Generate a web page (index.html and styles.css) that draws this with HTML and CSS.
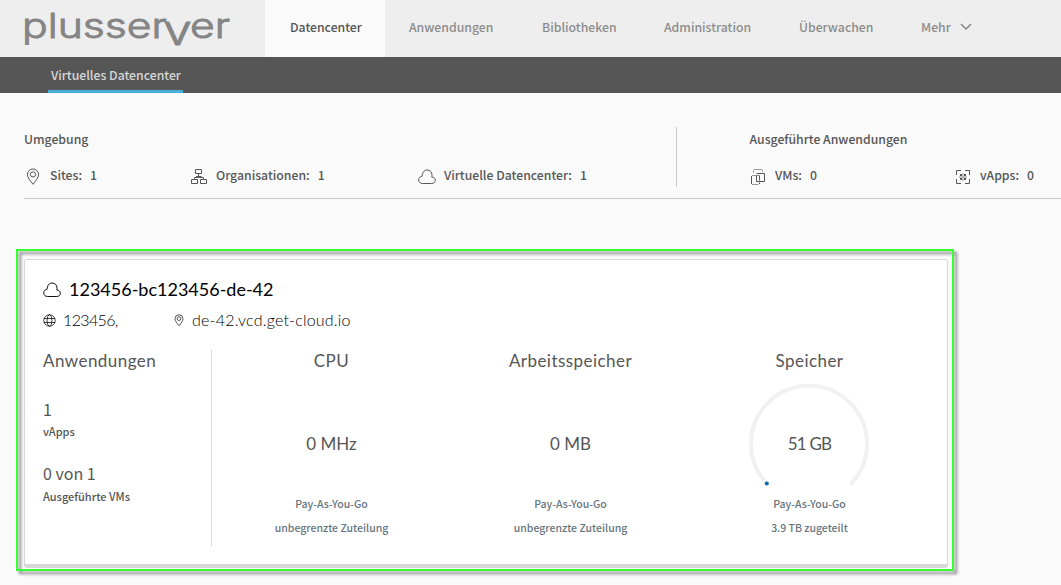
FILE: index.html
```html
<!DOCTYPE html>
<html lang="de">
<head>
<meta charset="utf-8">
<title>Virtuelles Datencenter</title>
<link rel="stylesheet" href="styles.css">
</head>
<body>
<svg class="sprite" aria-hidden="true">
  <symbol id="pin" viewBox="0 0 14 18"><path d="M7 16.3C4.2 12.6 1.4 9.6 1.4 6.6a5.6 5.6 0 0 1 11.2 0C12.6 9.6 9.8 12.6 7 16.3Z"/><circle cx="7" cy="6.4" r="2.6"/></symbol>
  <symbol id="cloud" viewBox="0 0 18 16"><path d="M4.6 14.5C2.2 14.5.7 13 .7 10.900C.7 8.900 2.2 7.400 4.200 7.200C4.300 6.600 4.200 6.100 4.400 5.200C5.100 2.500 6.800 1 9 1C12.100 1 14 3.100 14 6.200C14 7 13.900 7.500 13.700 8C15.900 8.100 17.300 9.300 17.300 11.200C17.300 13.200 15.800 14.500 13.800 14.500Z"/></symbol>
</svg>
<header class="topbar">
  <svg class="logo" viewBox="0 0 210 48" role="img" aria-label="plusserver"><text x="-1" y="37.500" textLength="208" lengthAdjust="spacingAndGlyphs">plusser<tspan class="logo-v" dx="-3" dy="7">v</tspan><tspan dx="-1.500" dy="-7">er</tspan></text></svg>
  <nav class="nav">
    <a class="nav-item active">Datencenter</a>
    <a class="nav-item apps">Anwendungen</a>
    <a class="nav-item libs">Bibliotheken</a>
    <a class="nav-item admin">Administration</a>
    <a class="nav-item watch">Überwachen</a>
    <a class="nav-item more">Mehr <svg width="12" height="8" viewBox="0 0 12 8"><path d="M1 1l5 5 5-5"/></svg></a>
  </nav>
</header>
<div class="subnav"><a class="subnav-item">Virtuelles Datencenter</a></div>
<main>
  <section class="summary">
    <div class="group env">
      <h2>Umgebung</h2>
      <div class="stats">
        <div class="stat sites"><svg class="icon" width="14" height="18"><use href="#pin"/></svg><span>Sites:</span><b>1</b></div>
        <div class="stat orgs"><svg class="icon" width="16" height="16" viewBox="0 0 16 16"><path d="M4.500.5h6v4h-6zM7.500 4.500v3M5 7.500h5.500M3.500 10.500v-2h9v2M.5 10.500h6v4h-6zM9.500 10.500h6v4h-6z"/></svg><span>Organisationen:</span><b>1</b></div>
        <div class="stat vdcs"><svg class="icon" width="18" height="16"><use href="#cloud"/></svg><span>Virtuelle Datencenter:</span><b>1</b></div>
      </div>
    </div>
    <div class="group running">
      <h2>Ausgeführte Anwendungen</h2>
      <div class="stats">
        <div class="stat vms"><svg class="icon" width="15" height="16" viewBox="0 0 15 16"><path class="soft" d="M2.500 3.500V1.500q0-1 1-1h7q1 0 1 1V3M1 6.500h7.500M1 15.500h6.500"/><path d="M.5 15V7M8.500 6.500v5M8.500 13.500v1.500M5.500 6.500v6h8V4.500H5.500"/></svg><span>VMs:</span><b>0</b></div>
        <div class="stat vapps"><svg class="icon" width="14" height="14" viewBox="0 0 14 14"><path d="M.5 5V.5H5M9 .5h4.500V5M13.500 9v4.500H9M5 13.500H.5V9"/><path class="soft" d="M3 7h8M7 3v8"/><path class="solid" d="M4 4h2v2H4zM8 4h2v2H8zM4 8h2v2H4zM8 8h2v2H8z"/></svg><span>vApps:</span><b>0</b></div>
      </div>
    </div>
  </section>
  <div class="highlight">
    <article class="card">
      <div class="title"><svg class="icon" width="18" height="16"><use href="#cloud"/></svg><h1>123456-bc123456-de-42</h1></div>
      <div class="meta">
        <svg class="icon globe" width="13" height="13" viewBox="0 0 13 13"><circle cx="6.500" cy="6.500" r="5.700"/><ellipse cx="6.500" cy="6.500" rx="2.400" ry="5.700"/><path d="M1 4.500h11M1 8.500h11"/></svg>
        <span class="org">123456,</span>
        <svg class="icon" width="10" height="13"><use href="#pin" width="10" height="13"/></svg>
        <span class="host">de-42.vcd.get-cloud.io</span>
      </div>
      <div class="metrics">
        <div class="apps-col">
          <h3>Anwendungen</h3>
          <p class="count">1</p><p class="label">vApps</p>
          <p class="count second">0 von 1</p><p class="label last">Ausgeführte VMs</p>
        </div>
        <div class="metric"><h3>CPU</h3><div class="gauge"><span>0 MHz</span></div><p>Pay-As-You-Go</p><p>unbegrenzte Zuteilung</p></div>
        <div class="metric"><h3>Arbeitsspeicher</h3><div class="gauge"><span>0 MB</span></div><p>Pay-As-You-Go</p><p>unbegrenzte Zuteilung</p></div>
        <div class="metric"><h3>Speicher</h3><div class="gauge"><svg class="ring" width="120" height="120" viewBox="0 0 120 120"><path d="M17.600 100.400A58 58 0 1 1 102.400 100.400"/><circle cx="17.800" cy="100.500" r="2"/></svg><span class="gb">51 GB</span></div><p>Pay-As-You-Go</p><p>3.9 TB zugeteilt</p></div>
      </div>
    </article>
  </div>
</main>
</body>
</html>
```
FILE: styles.css
```css
* { box-sizing: border-box; }
body { margin: 0; height: 585px; overflow: hidden; background: #fafafa; color: #565656; font: 500 12.25px/24px "Noto Sans CJK SC", "Noto Sans", sans-serif; }
h1, h2, h3, p { margin: 0; font-weight: inherit; font-size: inherit; }
.sprite { display: none; }
.topbar { display: flex; height: 57px; background: #eee; padding-left: 23px; }
.logo { width: 210px; height: 48px; margin-right: 32px; flex: none; overflow: visible; }
.logo text { font: 300 34px Inter, sans-serif; fill: #858585; stroke: #858585; stroke-width: .9px; }
.logo .logo-v { font-size: 41px; font-weight: 300; }
.nav { display: flex; color: #8c8c8c; line-height: 54px; white-space: nowrap; }
.nav-item { flex: none; }
.active { width: 120px; padding-left: 25px; background: #fafafa; color: #565656; }
.apps { width: 157px; padding-left: 24px; }
.libs { width: 122px; }
.admin { width: 135px; }
.watch { width: 122px; }
.more { display: flex; align-items: center; gap: 9px; height: 54px; }
.more svg { fill: none; stroke: #858585; stroke-width: 1.5; }
.subnav { height: 36px; background: #565656; padding-left: 48px; color: #d7d7d7; }
.subnav-item { display: block; width: 135px; height: 36px; padding-left: 3px; line-height: 36px; border-bottom: 3px solid #49afd9; white-space: nowrap; }
.summary { display: flex; margin: 34px 0 0 24px; height: 72px; border-bottom: 1px solid #ccc; }
.env { width: 653px; height: 60px; border-right: 1px solid #ccc; }
.running { padding-left: 72.500px; }
.group h2 { line-height: 24px; }
.stats { display: flex; padding-top: 12px; white-space: nowrap; }
.stat { display: flex; flex: none; height: 24px; line-height: 24px; }
.stat b { font-weight: inherit; margin-left: 8px; }
.stat .icon { margin-top: 6px; }
.icon { flex: none; fill: none; stroke: #565656; stroke-width: 1; }
.icon .solid { fill: #565656; stroke: none; }
.icon .soft { stroke: #999; }
.sites { width: 167px; padding-left: 2px; }
.stat.sites .icon { margin-top: 5px; }
.sites span { margin-left: 10px; }
.orgs { width: 227px; }
.orgs span { margin-left: 9px; }
.vdcs span { margin-left: 8px; }
.vms { width: 206.500px; padding-left: 1.500px; }
.vms span { margin-left: 9px; }
.stat.vapps .icon { margin-top: 7px; }
.vapps span { margin-left: 10px; }
.highlight { position: relative; width: 938px; height: 322px; margin: 50px 0 0 16px; padding: 10px 6px 3px 8px; }
.highlight::after { content: ""; position: absolute; inset: 0; border: 2px solid #3f3; filter: drop-shadow(3px 3px 1.5px rgba(0,0,0,.5)); pointer-events: none; }
.card { height: 309px; background: #fff; border: 1px solid #d7d7d7; border-bottom-width: 4px; border-radius: 3px; padding: 18px; }
.card .icon { stroke: #111; }
.card .globe { stroke-width: .8; }
.title { display: flex; height: 24px; gap: 8px; color: #000; }
.title .icon { margin-top: 4px; }
h1, h3, .meta span, .gauge span { font-family: Lato, sans-serif; font-weight: 400; }
h1 { font-size: 18px; line-height: 22px; }
.meta { display: flex; height: 24px; margin-top: 6px; color: #000; line-height: 24px; align-items: center; font-size: 16px; }
.meta .org { width: 111px; margin-left: 7px; font-weight: 300; letter-spacing: -.65px; }
.meta .host { margin-left: 8px; font-weight: 300; letter-spacing: .2px; }
.metrics { display: flex; margin-top: 18px; height: 196px; }
.apps-col { width: 169px; border-right: 1px solid #d7d7d7; }
.metric { width: 239px; text-align: center; font-size: 10.500px; color: #667580; }
h3 { height: 24px; font-size: 17px; line-height: 22px; color: #565656; letter-spacing: .45px; }
.gauge { position: relative; display: grid; place-items: center; height: 118px; padding-top: 22px; color: #565656; }
.gauge span { font-size: 17px; line-height: 24px; }
.gauge .gb { letter-spacing: -.8px; }
.ring { position: absolute; left: 59px; top: 9px; }
.ring path { fill: none; stroke: #f1f1f1; stroke-width: 4; stroke-linecap: round; }
.ring circle { fill: #0065ab; }
.metric p { line-height: 24px; }
.count { font-size: 16px; line-height: 24px; margin-top: 23px; font-weight: 400; }
.label { font-size: 11px; line-height: 21px; }
.count.second { margin-top: 19px; }
.last { line-height: 23px; }
```
